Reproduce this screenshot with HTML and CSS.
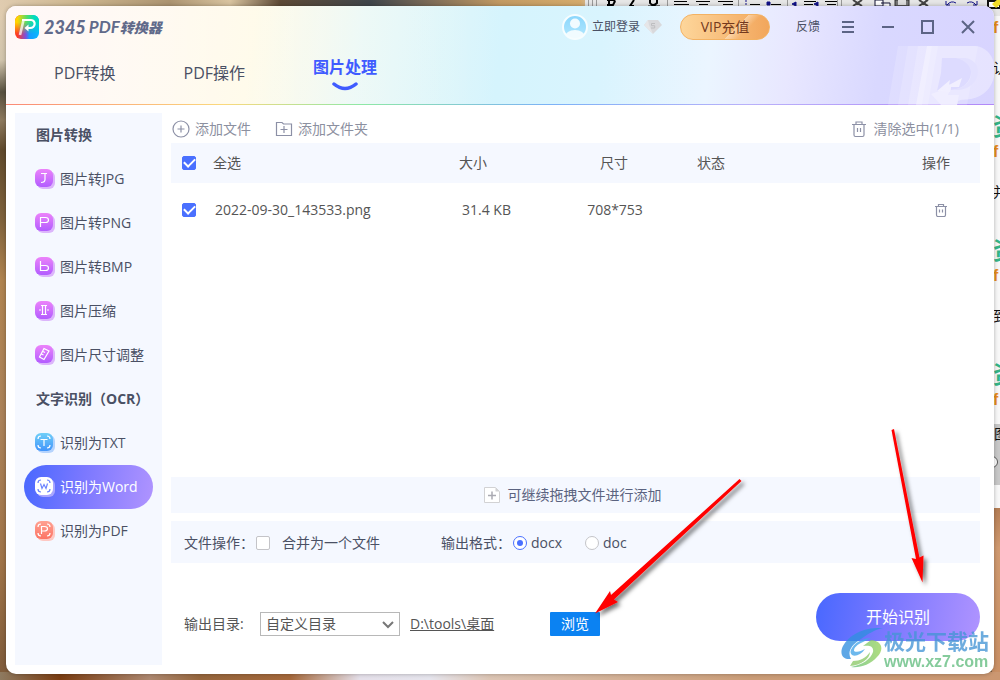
FILE: index.html
```html
<!DOCTYPE html>
<html lang="zh-CN">
<head>
<meta charset="utf-8">
<title>2345PDF转换器</title>
<link rel="stylesheet" href="styles.css">
</head>
<body>
<div class="wallpaper" aria-hidden="true"><div class="wall-top"></div><div class="wall-bottom"></div></div>
<div class="editor" aria-hidden="true">
  <svg class="editor-bar" width="415" height="16" viewBox="0 0 415 16">
    <path d="M0 0H415V16H0Z" fill="#e6e6e6"/>
    <path d="M3.500 0V6M7.500 0V6M11.500 0V6M82.500 0V6M153.500 0V6M202.500 0V6M252.500 0V6M256.500 0V6M340.500 0V6" stroke="#999"/>
    <path d="M22 0h6q3 1 1 3l-1 2h-6M24 0v5M49 0l-4 6h4M65 0v3q3 4 7 0V0M63 6.500h12" fill="none" stroke="#000" stroke-width="2"/>
    <path d="M89 1.500h13M89 4.500h15M111 1.500h14M114 4.500h9M133 1.500h15M138 4.500h10M165 4.500h10M186 4.500h10M219 1.500h12M219 4.500h9M240 1.500h12M242 4.500h9" stroke="#000" stroke-width="1"/>
    <path d="M160 1h2M160 4h2M182 2h3v3h-3ZM207 4l4-2v4ZM229 4l4-2v4Z" fill="#118" stroke="#118"/>
    <path d="M268 0l9 6M277 0l-9 6M334 0l9 6M343 0l-9 6" stroke="#444" stroke-width="2"/>
    <path d="M290 0h8v6h-8ZM296 3h9v4" fill="#fff" stroke="#113"/>
    <path d="M310 0h14v6h-14Z" fill="#777" stroke="#333"/><path d="M313 0h8v5h-8Z" fill="#ddd"/>
    <path d="M361 1v4h4M362 5q4-5 9-2M392 1v4h-4M391 5q-4-5-9-2" fill="none" stroke="#118"/>
    <path d="M403 1h12v7h-12Z" fill="#fff" stroke="#111" stroke-width="2"/><path d="M407 4l6-5h3v5l-5 4Z" fill="#f1dc28"/>
  </svg>
  <div class="editor-text">
    <p class="bit">f</p><p class="dark">认</p>
    <p class="brand">资</p><p class="bit">f</p><p class="dark">并</p>
    <p class="brand">资</p><p class="bit">f</p><p class="dark">到</p>
    <p class="brand">资</p><p class="bit">f</p>
  </div>
  <div class="editor-status">图<i></i></div>
</div>

<div class="window">
  <header class="head">
    <svg class="head-mark" width="107" height="60" viewBox="0 0 107 60" aria-hidden="true">
      <g fill="#fff">
        <path d="M11 1h80L80 60H1Z" opacity=".16"/>
        <path d="M21 1h30L41 60H11Z" opacity=".16"/>
        <path d="M31 1h14L35 60H21Z" opacity=".18"/>
        <path d="M40 1h48c27 2 27 48-4 53-6 1-9 0-13 2l-1 4H29Z" opacity=".36"/>
      </g>
      <path d="M55 13h14c20 0 20 26 1 31l-6 1-1-6-13 7 4-18Z" fill="#dad8ff" opacity=".85"/>
      <path d="M69 13h9c21 3 15 31-7 32h-7c25-2 27-27 5-32Z" fill="#e3e1ff"/>
      <path d="m75 33-3 9h-8l-1 5-13-1 13-11-1 5Z" fill="#f1efff"/>
      <path d="m44 49 20-7-3 8h11l-2 10H54Z" fill="#f1efff" opacity=".8"/>
    </svg>
    <div class="topbar">
      <div class="logo">
        <svg width="24" height="24" viewBox="0 0 24 24" aria-hidden="true">
          <defs>
            <linearGradient id="lg1" x1="0" y1="0" x2="1" y2="0"><stop offset=".1" stop-color="#ffd500"/><stop offset=".5" stop-color="#4fdc6c"/><stop offset=".8" stop-color="#00dcc0"/></linearGradient>
            <linearGradient id="lg2" x1="0" y1="0" x2="1" y2="0"><stop offset=".1" stop-color="#ff3b25"/><stop offset=".45" stop-color="#7b50e0"/><stop offset=".6" stop-color="#179cff"/><stop offset="1" stop-color="#0cb8ff"/></linearGradient>
            <linearGradient id="lg3" x1="0" y1="0" x2="0" y2="1"><stop offset=".3" stop-color="#fff"/><stop offset=".8" stop-color="#000"/></linearGradient>
            <mask id="lm"><path d="M0 0h24v24H0Z" fill="url(#lg3)"/></mask>
          </defs>
          <rect width="24" height="24" rx="6" fill="url(#lg2)"/>
          <rect width="24" height="24" rx="6" fill="url(#lg1)" mask="url(#lm)"/>
          <path d="M8.500 5 5 20" stroke="#fff" stroke-width="2.600" opacity=".75"/>
          <path d="M7 5h9c5.500 .5 4.500 8-1 8h-2" fill="none" stroke="#fff" stroke-width="2.200"/>
          <path d="M13.500 9.500v7l-4-3.500Z" fill="#fff"/>
        </svg>
        <span class="logo-num">2345</span><span class="logo-pdf">PDF</span><span class="logo-cn">转换器</span>
      </div>
      <div class="account">
        <button class="login">
          <svg width="26" height="26" viewBox="0 0 26 26" aria-hidden="true"><defs><linearGradient id="av" x1="0" y1="0" x2="0" y2="1"><stop stop-color="#8ad6fc"/><stop offset="1" stop-color="#b4e8fe"/></linearGradient><clipPath id="avc"><circle cx="13" cy="13" r="12"/></clipPath></defs><circle cx="13" cy="13" r="12" fill="url(#av)"/><g clip-path="url(#avc)" fill="#f1fbff"><circle cx="13" cy="9.500" r="5"/><ellipse cx="13" cy="23" rx="10" ry="7"/></g><circle cx="13" cy="13" r="12" fill="none" stroke="#f6fdff" stroke-width="2"/></svg>
          <span>立即登录</span>
          <svg width="18" height="14" viewBox="0 0 18 14" aria-hidden="true"><path d="M4 0h10l4 5-9 9-9-9Z" fill="#d9d9dc"/><path d="M4 0 0 5l9 9L5 5Z" fill="#e6e6e8"/><path d="M11 3.500H7.500v2.200h3.200V8H7" fill="none" stroke="#bebec0"/></svg>
        </button>
        <button class="vip"><span>VIP充值</span></button>
        <button class="feedback">反馈</button>
        <button class="win" aria-label="菜单"><svg width="14" height="14" viewBox="0 0 14 14"><path d="M1 2h12M1 7h12M1 12h12"/></svg></button>
        <button class="win" aria-label="最小化"><svg width="14" height="14" viewBox="0 0 14 14"><path d="M1 7h12"/></svg></button>
        <button class="win" aria-label="最大化"><svg width="14" height="14" viewBox="0 0 14 14"><path d="M1 1h11v12H1Z"/></svg></button>
        <button class="win" aria-label="关闭"><svg width="14" height="14" viewBox="0 0 14 14"><path d="m1 1 12 12M13 1 1 13"/></svg></button>
      </div>
    </div>
    <nav class="tabs">
      <a href="#pdf-convert">PDF转换</a>
      <a href="#pdf-edit">PDF操作</a>
      <a href="#image" class="current">图片处理<svg width="26" height="9" viewBox="0 0 26 9" aria-hidden="true"><path d="M2 2q11 9 22 0" fill="none" stroke="#3f5bff" stroke-width="3.500" stroke-linecap="round"/></svg></a>
    </nav>
  </header>

  <div class="body">
    <aside class="side">
      <svg width="0" height="0" class="defs" aria-hidden="true"><defs>
        <linearGradient id="pk" x1="0" y1="0" x2="0" y2="1"><stop stop-color="#ec83fa"/><stop offset="1" stop-color="#b25cff"/></linearGradient>
        <linearGradient id="bl" x1="0" y1="0" x2="0" y2="1"><stop stop-color="#70cff8"/><stop offset="1" stop-color="#4295fb"/></linearGradient>
        <linearGradient id="rd" x1="0" y1="0" x2="0" y2="1"><stop stop-color="#ffa192"/><stop offset="1" stop-color="#fc7565"/></linearGradient>
      </defs></svg>
      <h2>图片转换</h2>
      <a href="#jpg"><svg width="20" height="20" viewBox="0 0 20 20"><rect x="2" y="2" width="18" height="18" rx="6" fill="#dcb5fb"/><rect width="18" height="18" rx="6" fill="url(#pk)"/><path d="M6 4.500h6M10 4.500v6q0 3-4 3"/></svg>图片转JPG</a>
      <a href="#png"><svg width="20" height="20" viewBox="0 0 20 20"><rect x="2" y="2" width="18" height="18" rx="6" fill="#dcb5fb"/><rect width="18" height="18" rx="6" fill="url(#pk)"/><path d="M5.500 14V4.500h5q3 0 3 2.500t-3 2.500h-5"/></svg>图片转PNG</a>
      <a href="#bmp"><svg width="20" height="20" viewBox="0 0 20 20"><rect x="2" y="2" width="18" height="18" rx="6" fill="#dcb5fb"/><rect width="18" height="18" rx="6" fill="url(#pk)"/><path d="M5.500 4v9.500h5q3 0 3-2.500t-3-2.500h-5"/></svg>图片转BMP</a>
      <a href="#compress"><svg width="20" height="20" viewBox="0 0 20 20"><rect x="2" y="2" width="18" height="18" rx="6" fill="#dcb5fb"/><rect width="18" height="18" rx="6" fill="url(#pk)"/><path d="M6 4.500h6M6 13.500h6M7.500 5v8M10.500 5v8M4 9h2M12 9h2"/></svg>图片压缩</a>
      <a href="#resize"><svg width="20" height="20" viewBox="0 0 20 20"><rect x="2" y="2" width="18" height="18" rx="6" fill="#dcb5fb"/><rect width="18" height="18" rx="6" fill="url(#pk)"/><path d="m9 3.500 5 2.500-5 8.500L4.500 12ZM8 6.500l2 1M6.500 9l2 1"/></svg>图片尺寸调整</a>
      <h2>文字识别（OCR）</h2>
      <a href="#txt"><svg width="20" height="20" viewBox="0 0 20 20"><rect x="2" y="2" width="18" height="18" rx="6" fill="#b5d3fd"/><rect width="18" height="18" rx="6" fill="url(#bl)"/><path d="M5.500 6.500h7M9 6.500V13M3 6q0-3 3-3M12 3q3 0 3 3M3 12q0 3 3 3M12 15q3 0 3-3"/></svg>识别为TXT</a>
      <a href="#word" class="current"><svg width="20" height="20" viewBox="0 0 20 20"><rect x="2" y="2" width="18" height="18" rx="6" fill="#a9a6ff"/><rect width="18" height="18" rx="6" fill="#fff"/><path class="ink" d="m5.500 6.500 1.500 5 2-4 2 4 1.500-5M3 6q0-3 3-3M12 3q3 0 3 3M3 12q0 3 3 3M12 15q3 0 3-3"/></svg>识别为Word</a>
      <a href="#pdf"><svg width="20" height="20" viewBox="0 0 20 20"><rect x="2" y="2" width="18" height="18" rx="6" fill="#fec8c3"/><rect width="18" height="18" rx="6" fill="url(#rd)"/><path d="M6.500 13V5.500h3q3 0 3 2.200T9.500 10h-3M3 6q0-3 3-3M12 3q3 0 3 3M3 12q0 3 3 3M12 15q3 0 3-3"/></svg>识别为PDF</a>
    </aside>

    <main class="main">
      <div class="tools">
        <button><svg width="18" height="18" viewBox="0 0 18 18"><circle cx="9" cy="9" r="8"/><path d="M5.500 9h7M9 5.500v7"/></svg>添加文件</button>
        <button><svg width="18" height="18" viewBox="0 0 18 18"><path d="M1.500 2.500H7l1.500 1.500h8v11.500h-15ZM5.500 9.500h7M9 6v7"/></svg>添加文件夹</button>
        <button class="clear"><svg width="16" height="18" viewBox="0 0 16 18"><path d="M1 4.500h14M5 4.500V2h6v2.500M3 4.500V15q0 1.500 1.500 1.500h7q1.500 0 1.500-1.500V4.500M6.500 8v4M9.500 8v4"/></svg>清除选中(1/1)</button>
      </div>
      <div class="list">
        <table class="files">
          <thead><tr>
            <th class="c-check"><input type="checkbox" class="box" id="all" checked></th>
            <th class="c-name"><label for="all">全选</label></th>
            <th class="c-size">大小</th><th class="c-dim">尺寸</th><th class="c-state">状态</th><th class="c-act">操作</th>
          </tr></thead>
          <tbody><tr>
            <td class="c-check"><input type="checkbox" class="box" id="f1" checked></td>
            <td class="c-name"><label for="f1">2022-09-30_143533.png</label></td>
            <td class="c-size">31.4 KB</td><td class="c-dim">708*753</td><td></td>
            <td class="c-act"><button class="del" aria-label="删除"><svg width="14" height="14" viewBox="0 0 14 14"><path d="M1 3.500h12M4.500 3.500v-2h5v2M2.500 3.500V12q0 1.500 1.500 1.500h6q1.500 0 1.500-1.500V3.500M5.500 6.500v3M8.500 6.500v3"/></svg></button></td>
          </tr></tbody>
        </table>
      </div>
      <div class="drop"><svg width="16" height="16" viewBox="0 0 16 16" aria-hidden="true"><path d="M.5.500h11l4 4v11H.5Z" fill="#fff" stroke="#d2d2d4"/><path d="M11.500.500v4h4Z" fill="#d2d2d4"/><path d="M4 8.500h8M8 4.500v8" stroke="#aaaab2" stroke-width="1.500"/></svg>可继续拖拽文件进行添加</div>
      <div class="options">
        <span class="opt-title">文件操作：</span>
        <input type="checkbox" class="box" id="merge"><label for="merge" class="merge">合并为一个文件</label>
        <span class="opt-title">输出格式：</span>
        <input type="radio" class="dot" name="fmt" id="docx" checked><label for="docx" class="docx">docx</label>
        <input type="radio" class="dot" name="fmt" id="doc"><label for="doc">doc</label>
      </div>
      <div class="output">
        <label for="dir" class="dir-label">输出目录:</label>
        <div class="pick"><select id="dir"><option>自定义目录</option></select><svg width="12" height="8" viewBox="0 0 12 8" aria-hidden="true"><path d="m1 1 5 5 5-5" fill="none" stroke="#777" stroke-width="2"/></svg></div>
        <a href="#desktop" class="path">D:\tools\桌面</a>
        <button class="browse">浏览</button>
        <button class="start">开始识别</button>
      </div>
    </main>
  </div>
</div>

<svg class="arrows" width="1000" height="680" viewBox="0 0 1000 680" aria-hidden="true">
  <defs><filter id="sh" x="-20%" y="-20%" width="150%" height="150%"><feDropShadow dx="3" dy="3" stdDeviation="2" flood-color="#000" flood-opacity=".55"/></filter></defs>
  <g filter="url(#sh)" fill="#f00">
    <path d="M739.500 479 611 595l-1-4-15 22.500L618 602l-4-2.500L741.500 481Z"/>
    <path d="m891.500 430 24.500 129-4.500-1L922.500 582.500l1-27-4 2L894 429Z"/>
  </g>
</svg>
<div class="stamp" aria-hidden="true">
  <svg width="42" height="40" viewBox="0 0 42 40">
    <defs><linearGradient id="sg" x1="0" y1="0" x2="1" y2="0"><stop stop-color="#65c07c"/><stop offset="1" stop-color="#9ad35c"/></linearGradient></defs>
    <path d="M42 0C22-1 8 7 2 18c-4 8 0 14 8 13-4-7 0-14 10-20C27 6 33 2 42 0Z" fill="#318fe0"/>
    <path d="M11 20c4-7 13-10 19-10l-8 4c-6 3-9 5-9 9 3 2 7 0 11-2-4 6-10 8-13 6-2-2-2-4 0-7Z" fill="#45a5e8"/>
    <path d="M30 12c12 1 13 10 6 17-7 8-17 11-26 10 11-2 20-8 22-15 1-6-4-7-10-6Z" fill="url(#sg)"/>
    <path d="M12 33c7 0 13-3 17-9 0 7-9 13-20 14Z" fill="#8cca69"/>
  </svg>
  <div><div class="stamp-cn">极光下载站</div><div class="stamp-url">www.xz7.com</div></div>
</div>
</body>
</html>
```
FILE: styles.css
```css
* { box-sizing: border-box; }
body {
  margin: 0;
  min-height: 100vh;
  padding: 6px;
  display: flex;
  position: relative;
  overflow: hidden;
  font: 14px/20px "Open Sans", "Noto Sans CJK SC", sans-serif;
  color: #4a5064;
}
button {
  border: 0;
  padding: 0;
  background: none;
  font: inherit;
  color: inherit;
  display: flex;
  align-items: center;
}
a { color: inherit; text-decoration: none; }
svg { display: block; flex: none; }

.wallpaper {
  position: absolute;
  inset: 0;
  background: linear-gradient(180deg, #e0ccb0 0, #d2c5ad 60px, #58503f 92px, #8d7a5e 120px, #604a2c 150px, #80633c 220px, #b08450 280px, #ab8259 420px, #a07448 560px, #7d5a3a 680px);
}
.wall-top {
  height: 50%;
  background: linear-gradient(90deg, #e0ccb0 0, #cdb68f 8%, #ac9471 17%, #d9c4a0 23%, #5e4a36 28%, #40464b 37%, #7d6c58 43%, #c29a63 50%, #d5aa6b 58%, #ccc 60%) 0 0 / 100% 20px no-repeat;
}
.wall-bottom {
  position: absolute;
  right: 0;
  bottom: 0;
  width: 100%;
  height: 172px;
  background:
    linear-gradient(90deg, #8e7a60 0, #7b3d12 6%, #ad8870 15%, #96663d 20%, #a5683b 29%, #e5e0ea 36%, #e6e5ed 43%, #dcc5b4 49%, #cb9d78 75%, #cb9771 100%) 0 100% / 100% 8px no-repeat,
    linear-gradient(180deg, #b57e55, #d09a70 40px, #c98f64) 100% 0 / 8px 100% no-repeat;
}
.editor {
  position: absolute;
  top: 0;
  right: 0;
  width: 415px;
  height: 508px;
  background: #f8f8f8;
  overflow: hidden;
}
.editor-text { margin: 0 0 0 408px; width: 30px; }
.editor-text p { margin: 0; height: 30px; }
.editor-text .bit { height: 24px; font: bold 16px/24px "Liberation Sans", sans-serif; color: #e88c1c; }
.editor-text .dark { height: 70px; padding-top: 18px; color: #111; }
.editor-text .brand { font: bold 24px/30px "Noto Sans CJK SC", sans-serif; color: #34b487; }
.editor-status {
  position: absolute;
  right: 0;
  bottom: 23px;
  width: 6px;
  height: 61px;
  background: #c8c8c8;
  color: #111;
}
.editor-status i { display: block; width: 12px; height: 12px; margin: 12px 0 0 -8px; border: 1px solid #555; border-radius: 50%; background: #fff; }

.window {
  position: relative;
  flex: 1;
  display: flex;
  flex-direction: column;
  background: #fff;
  border-radius: 10px;
  overflow: hidden;
  box-shadow: 0 0 4px rgba(0, 0, 0, .3);
}
.head {
  position: relative;
  height: 99px;
  padding: 0 19px 0 9px;
  background:
    linear-gradient(90deg, #fb8a76, #fbd97d 22%, #8ee8a6 36%, #7cb2f6 55%, #b9b1fa 75%, #b188f8) 0 100% / 100% 1px no-repeat,
    linear-gradient(90deg, rgba(255, 255, 255, .6), rgba(255, 255, 255, 0) 50%),
    linear-gradient(97deg, #ffedec 0, #fff5ea 12%, #fff9e2 25%, #eaf8f5 36%, #d5f4fd 50%, #d9f4fe 60%, #ebf5ff 71%, #e8e7ff 79%, #d9d8ff 88%, #d8d4ff 100%);
}
.head-mark { position: absolute; right: 0; bottom: 0; }
.topbar { position: relative; height: 42px; display: flex; align-items: center; justify-content: space-between; }
.logo { display: flex; align-items: center; color: #616a8a; }
.logo-num { margin: 0 3px 0 5px; font: italic 900 18px/20px Lato, sans-serif; }
.logo-pdf { font: italic 700 17px/20px Lato, sans-serif; }
.logo-cn { font: italic 900 14px/20px "Noto Sans CJK SC", sans-serif; }
.account { display: flex; align-items: center; font-size: 12px; }
.login { gap: 4px; margin-right: 18px; }
.vip {
  width: 90px;
  height: 26px;
  justify-content: center;
  border: 1px solid #f3b263;
  border-radius: 13px;
  background: linear-gradient(135deg, transparent 60%, rgba(255, 240, 220, .5) 60%, rgba(255, 240, 220, 0) 72%), linear-gradient(90deg, #fdd69b, #f2a65c);
  color: #74391d;
  font-size: 14px;
  margin-right: 26px;
}
.feedback { margin-right: 21px; }
.win { margin-right: 26px; }
.win:last-child { margin-right: 0; }
.win svg { fill: none; stroke: #5c6485; stroke-width: 2; }

.tabs { position: relative; display: flex; gap: 68px; padding: 14px 0 0 39px; font-size: 16px; line-height: 22px; }
.tabs .current { margin-top: -6px; color: #3f5bff; font-weight: 700; }
.tabs .current svg { margin: 4px auto 0; }

.body { flex: 1; display: flex; gap: 9px; padding: 8px 14px 9px 9px; }
.side { width: 147px; padding: 0 9px; background: #f5f8ff; }
.defs { position: absolute; }
.side h2 { margin: 0; padding-left: 12px; font-size: 14px; line-height: 44px; font-weight: 700; white-space: nowrap; }
.side a { height: 44px; padding-left: 11px; border-radius: 22px; display: flex; align-items: center; gap: 5px; white-space: nowrap; }
.side a svg { fill: none; stroke: #fff; stroke-width: 1.2; }
.side a rect { stroke: none; }
.side .ink { stroke: #6b83ff; }
.side a.current { background: linear-gradient(100deg, #4868ff, #7b78ff 45%, #b094ff); color: #fff; }

.main { flex: 1; min-width: 0; display: flex; flex-direction: column; }
.tools { height: 30px; display: flex; align-items: center; gap: 24px; padding: 2px 21px 0 1px; color: #8c90a0; }
.tools button { gap: 5px; }
.tools .clear { margin-left: auto; gap: 7px; }
.tools svg, .del svg { fill: none; stroke: #8c90a6; stroke-width: 1.2; }
.list { flex: 1; }
.files { width: 100%; border-collapse: collapse; table-layout: fixed; }
.files th, .files td { padding: 0; font-weight: 400; text-align: left; color: #555; }
.files th { height: 40px; background: #f5f8ff; }
.files td { height: 54px; }
.files .c-check { width: 42px; padding-left: 11px; }
.files .c-name { width: 246px; }
.files td.c-name { padding-left: 2px; }
.files .c-size { width: 90px; }
.files td.c-size { padding-left: 3px; }
.files .c-dim { width: 130px; text-align: center; }
.files td.c-dim { padding-left: 2px; }
.files .c-state { width: 64px; text-align: center; }
.files .c-act { text-align: right; padding-right: 30px; }
.files td.c-act { padding-right: 32px; }
.del { margin-left: auto; }

.box, .dot { appearance: none; flex: none; display: grid; place-items: center; width: 14px; height: 14px; margin: 0; border: 1px solid #c4c4c8; background: #fff; }
.box { border-radius: 2px; }
.box:checked { border-color: #4a70ff; background: #4a70ff; }
.box:checked::after { content: ""; width: 9px; height: 5px; margin-bottom: 3px; border: solid #fff; border-width: 0 0 2px 2px; transform: rotate(-45deg); }
.dot { border-radius: 50%; }
.dot:checked { border-color: #4a70ff; }
.dot:checked::after { content: ""; width: 6px; height: 6px; border-radius: 50%; background: #4a70ff; }

.drop { height: 36px; display: flex; align-items: center; justify-content: center; gap: 8px; padding-right: 6px; background: #f5f8ff; color: #5b6380; }
.options { height: 42px; margin-top: 8px; padding: 2px 13px 0; display: flex; align-items: center; background: #f5f8ff; }
.opt-title { width: 72px; white-space: nowrap; }
.merge { margin: 0 61px 0 12px; }
.docx { margin-right: 23px; }
.dot + label { padding-left: 4px; }
.output { height: 102px; padding-left: 13px; display: flex; align-items: center; padding-top: 20px; color: #555; }
.dir-label { width: 76px; }
.pick { position: relative; width: 140px; }
.pick select { appearance: none; display: block; width: 100%; height: 24px; padding: 0 5px; border: 1px solid #b8b8b8; border-radius: 0; background: #fff; color: #555; font: inherit; }
.pick svg { position: absolute; right: 6px; top: 9px; pointer-events: none; }
.path { width: 140px; padding-left: 10px; text-decoration: underline; }
.browse { width: 50px; height: 24px; margin-left: 10px; justify-content: center; background: #0b82f2; color: #fff; border-radius: 1px; }
.start { width: 164px; height: 48px; margin: 0 0 14px auto; justify-content: center; border-radius: 24px; background: linear-gradient(100deg, #4868ff, #7b78ff 45%, #b094ff); color: #fff; font-size: 16px; }

.arrows { position: absolute; left: 0; top: 0; pointer-events: none; }
.stamp { position: absolute; right: 11px; bottom: 8px; display: flex; gap: 1px; pointer-events: none; opacity: .78; }
.stamp-cn { font: 700 21px/24px "Noto Sans CJK SC", sans-serif; color: #4595d6; white-space: nowrap; }
.stamp-url { font: 700 16px/20px "Liberation Sans", sans-serif; color: #64bd80; }
```
